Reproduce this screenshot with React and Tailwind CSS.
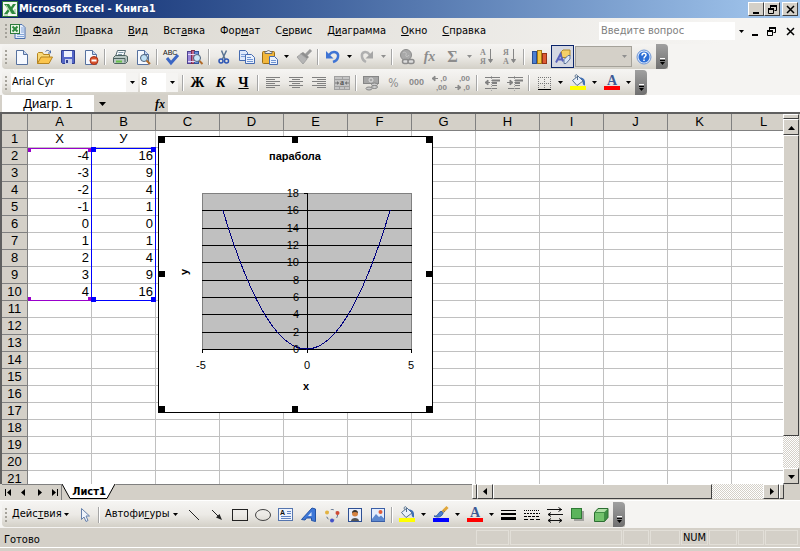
import React, { useState } from 'react';

const COLUMNS = 'ABCDEFGHIJKL'.split('');
const ROWS = Array.from({ length: 21 }, (_, i) => i + 1);

const DATA = [
  ['X', 'У'],
  [-4, 16],
  [-3, 9],
  [-2, 4],
  [-1, 1],
  [0, 0],
  [1, 1],
  [2, 4],
  [3, 9],
  [4, 16],
];

const MENU = [
  ['', 'Ф', 'айл'],
  ['', 'П', 'равка'],
  ['', 'В', 'ид'],
  ['Вст', 'а', 'вка'],
  ['Фор', 'м', 'ат'],
  ['С', 'е', 'рвис'],
  ['Д', 'и', 'аграмма'],
  ['', 'О', 'кно'],
  ['', 'С', 'правка'],
];

const Svg = ({ children, w = 16, h = 16 }) => (
  <svg width={w} height={h} viewBox={`0 0 ${w} ${h}`} fill="none" aria-hidden="true" className="shrink-0 overflow-visible">
    {children}
  </svg>
);

/* ---------- icons ---------- */

const ExcelIcon = () => (
  <Svg>
    <rect x="0.5" y="0.5" width="15" height="15" fill="#f4f8f1" stroke="#2d7a3c" />
    <path d="M2 3h5l2 3 2-3h3l-3.500 5 3.500 5h-4.500L7.500 10 5.500 13H2l4-5z" fill="#2f8a3e" />
    <path d="M9.500 13 4 4" stroke="#bfe3b8" />
    <path d="M12 9h2M12 11h2M2 14h4" stroke="#8fbf8f" />
  </Svg>
);

const WorkbookIcon = () => (
  <Svg>
    <path d="M5 1.500h7l3 3v11H5z" fill="#e6eefb" stroke="#4a6fae" />
    <path d="M11 5h3M11 7h3M11 9h3M7 11.500h7M7 13.500h7" stroke="#86a6d8" />
    <rect x="0.500" y="1.500" width="9" height="9" fill="#e9f5e6" stroke="#2d7a3c" />
    <path d="m2.500 3.500 5 5m0-5-5 5" stroke="#2f8a3e" strokeWidth="2" />
  </Svg>
);

const Page = () => (
  <>
    <path d="M2.500 1.500h7l4 4v10h-11z" fill="#f6f9ff" stroke="#56719f" />
    <path d="M9.500 1.500v4h4" fill="#c6d6f2" stroke="#56719f" />
  </>
);

const NewIcon = () => <Svg><Page /></Svg>;

const OpenIcon = () => (
  <Svg>
    <path d="M0.500 14.500v-10l1-1h4l1 2h6v3" fill="#f9d978" stroke="#b58421" />
    <path d="M0.500 14.500 4 8h11.500L12 14.500z" fill="#fbc54d" stroke="#b58421" />
    <path d="M8.500 2.500c2-2 4-1 5 1m0-2v2.500h-2.500" stroke="#4c6ea8" />
  </Svg>
);

const SaveIcon = () => (
  <Svg>
    <path d="M1.500 1.500h13v13h-12l-1-1z" fill="#5567c8" stroke="#31408f" />
    <rect x="4" y="2" width="8" height="6" fill="#eef2fc" />
    <rect x="5" y="10" width="7" height="5" fill="#c8d0ea" />
    <rect x="6" y="11" width="2" height="3" fill="#31408f" />
  </Svg>
);

const PermissionIcon = () => (
  <Svg>
    <Page />
    <circle cx="11" cy="11.500" r="4" fill="#d9512c" stroke="#a7341a" />
    <path d="M8.500 11.500h5" stroke="#fff" strokeWidth="2" />
  </Svg>
);

const PrintIcon = () => (
  <Svg>
    <path d="M5.500 1.500h8l-2 6h-8z" fill="#f7fafc" stroke="#556b73" />
    <path d="M6.500 3.500h5M6 5.500h4" stroke="#7f98a8" />
    <path d="M1.500 8.500 3.500 6.500h10l2 1v5l-2 2h-11l-1-1z" fill="#b9c7c4" stroke="#4d625f" />
    <path d="M2 9.500h11v4" stroke="#4d625f" />
    <path d="M4 12.500h6" stroke="#68c14b" strokeWidth="2" />
  </Svg>
);

const PreviewIcon = () => (
  <Svg>
    <Page />
    <circle cx="9" cy="9" r="3.500" fill="#bfe0f6" stroke="#4b5f78" />
    <path d="m11.500 11.500 3.500 3.500" stroke="#b06a28" strokeWidth="2" />
  </Svg>
);

const SpellIcon = () => (
  <Svg w={18} h={18}>
    <path d="m4 10 4 5 7-8" stroke="#3b66c4" strokeWidth="3" />
    <text x="0" y="7" fontSize="7" fontFamily="Liberation Sans, sans-serif" fill="#111">ABC</text>
  </Svg>
);

const ResearchIcon = () => (
  <Svg>
    <rect x="0.500" y="2.500" width="4" height="12" fill="#9a86d8" stroke="#4f4390" />
    <rect x="4.500" y="1.500" width="3" height="13" fill="#c46a8c" stroke="#7c3050" />
    <rect x="7.500" y="2.500" width="4" height="12" fill="#6c8fd8" stroke="#35549a" />
    <path d="M1 5.500h10M1 12.500h10" stroke="#e6dcf6" />
    <circle cx="10" cy="9" r="3.500" fill="#c9e6f8" stroke="#4b5f78" />
    <path d="m12.500 12 3 3" stroke="#b06a28" strokeWidth="2" />
  </Svg>
);

const CutIcon = () => (
  <Svg>
    <path d="M5.500 1.500 9 10M10.500 1.500 6.500 10" stroke="#5b7493" strokeWidth="1.500" />
    <circle cx="5" cy="12" r="2" stroke="#2c55b4" strokeWidth="1.500" />
    <circle cx="10.500" cy="12" r="2" stroke="#2c55b4" strokeWidth="1.500" />
  </Svg>
);

const CopyIcon = () => (
  <Svg>
    <path d="M0.500 1.500h6l2 2v8h-8z" fill="#dfe9fb" stroke="#466bb0" />
    <path d="M2 5.500h4M2 7.500h4" stroke="#7d9fd8" />
    <path d="M6.500 5.500h6l3 3v6h-9z" fill="#eaf1fd" stroke="#466bb0" />
    <path d="M8 8.500h4M8 10.500h6M8 12.500h6" stroke="#6f94d2" />
  </Svg>
);

const PasteIcon = () => (
  <Svg>
    <rect x="0.500" y="2.500" width="12" height="12" rx="1" fill="#f2b73c" stroke="#9c6d13" />
    <path d="M3 4.500V2.500h2l1.500-1.500L8 2.500h2v2z" fill="#e9eef5" stroke="#6d6d6d" />
    <path d="M7.500 7.500h5l3 3v5h-8z" fill="#eaf1fd" stroke="#466bb0" />
    <path d="M9 11.500h5M9 13.500h5" stroke="#6f94d2" />
  </Svg>
);

const BrushIcon = () => (
  <Svg>
    <path d="m15 1-5 5" stroke="#9b9b9b" strokeWidth="3" />
    <path d="m7 3 6 5-2 2-7-5z" fill="#8e8e8e" />
    <path d="m5 5 6 5-4 5-6-7z" fill="#b5b5b5" stroke="#a3a3a3" />
  </Svg>
);

const UndoIcon = () => (
  <Svg>
    <path d="M4 6c4-5 10-3 9 2-.5 3-2 4-5 5" stroke="#3f74d4" strokeWidth="2.500" />
    <path d="M1 2v7.500h7.500z" fill="#3f74d4" />
  </Svg>
);

const RedoIcon = () => (
  <Svg>
    <path d="M11 6C7 1 2 3 3 8c.5 3 2 4 4 5" stroke="#b0b0b0" strokeWidth="2.500" />
    <path d="M14 2v7.500H6.500z" fill="#a6a6a6" />
  </Svg>
);

const LinkIcon = () => (
  <Svg>
    <circle cx="7" cy="6" r="5.500" fill="#a8a8a8" stroke="#8c8c8c" />
    <path d="M4 4c2-2 4 0 3 2s2 2 3 0" stroke="#c6c6c6" />
    <rect x="3.500" y="10.500" width="6" height="4" rx="2" stroke="#8c8c8c" strokeWidth="1.500" fill="#ddd" />
    <rect x="9" y="10.500" width="6" height="4" rx="2" stroke="#8c8c8c" strokeWidth="1.500" fill="#ddd" />
  </Svg>
);

const SortIcon = ({ top, bottom }) => (
  <Svg>
    <g fontFamily="Liberation Serif, serif" fontWeight="bold" fontSize="8" fill="#8c8c8c">
      <text x="1" y="6">{top}</text>
      <text x="1" y="15">{bottom}</text>
    </g>
    <path d="M11.500 0v13M9.500 10.500l2 3 2-3z" stroke="#868686" fill="#868686" />
  </Svg>
);

const ChartIcon = () => (
  <Svg>
    <rect x="1.500" y="2.500" width="4" height="12" fill="#4c7ed0" stroke="#2b4f92" />
    <rect x="6.500" y="1.500" width="4" height="13" fill="#f5c542" stroke="#a77b13" />
    <rect x="11.500" y="4.500" width="4" height="10" fill="#dc5a33" stroke="#973116" />
  </Svg>
);

const DrawingIcon = () => (
  <Svg>
    <path d="M6.500 2.500 8 1h7v6l-1.500 1.500h-7z" fill="#f5d068" stroke="#b08a2a" />
    <path d="M1 13.500 5.500 5 8 12.500M2.500 10.500h5" stroke="#5a63bd" strokeWidth="2" />
    <path d="m9 10.500 4-4h2v3.500l-4 4.500H9z" fill="#dbe6f6" stroke="#5c7399" />
  </Svg>
);

const HelpIcon = () => (
  <Svg>
    <circle cx="8" cy="8" r="7" fill="#dbe8fb" stroke="#6f96d6" />
    <circle cx="8" cy="8" r="5.500" fill="#2e6fd6" />
    <path d="M6 6.500c0-3 4-3 4-.500 0 1.500-2 1.500-2 3.500M8 10.500V12" stroke="#fff" strokeWidth="1.500" />
  </Svg>
);

const LinesIcon = ({ d }) => (
  <Svg><path d={d} stroke="#808080" /></Svg>
);

const MergeIcon = () => (
  <Svg>
    <rect x="0.500" y="1.500" width="15" height="13" fill="#c4c4c4" stroke="#a0a0a0" />
    <path d="M1 4.500h14M1 11.500h14M8.500 1v3M5.500 12v2M10.500 12v2" stroke="#a0a0a0" />
    <path d="M1 8h4M11 8h4" stroke="#777" />
    <path d="m3 6 2 2-2 2zM13 6l-2 2 2 2z" fill="#777" />
    <text x="6" y="10" fontSize="8" fontWeight="bold" fontFamily="Liberation Serif, serif" fill="#555">a</text>
  </Svg>
);

const CurrencyIcon = () => (
  <Svg>
    <rect x="0.500" y="1.500" width="15" height="7" fill="#a6a6a6" stroke="#868686" />
    <circle cx="8" cy="5" r="2" stroke="#ddd" />
    <ellipse cx="11.500" cy="9.500" rx="3" ry="1.500" fill="#ccc" stroke="#868686" />
    <ellipse cx="11.500" cy="12" rx="3" ry="1.500" fill="#ccc" stroke="#868686" />
    <ellipse cx="6" cy="13.500" rx="3" ry="1.500" fill="#ccc" stroke="#868686" />
  </Svg>
);

const DecimalIcon = ({ top, bottom, more }) => (
  <Svg w={18}>
    <g fontFamily="Liberation Sans, sans-serif" fontWeight="bold" fontSize="8" fill="#8a8a8a" textAnchor="end">
      <text x="16" y="6">{top}</text>
      <text x="16" y="15">{bottom}</text>
    </g>
    {more
      ? <path d="M1 3.500h6M4 1 1 3.500 4 6z" stroke="#8a8a8a" fill="#8a8a8a" />
      : <path d="M1 12.500h6M4 10l3 2.500L4 15z" stroke="#8a8a8a" fill="#8a8a8a" />}
  </Svg>
);

const IndentIcon = ({ right }) => (
  <Svg>
    <path d="M1 2.500h15M8 10.500h5M1 13.500h12" stroke="#808080" />
    <path d="M8 5.500h8M8 8h5" stroke="#808080" strokeWidth="2" />
    <path d="M7.500 1v15" stroke="#a8a8a8" strokeDasharray="1 1" />
    {right
      ? <path d="M0 7.500h5M3 5l3 2.500L3 10z" stroke="#808080" fill="#808080" />
      : <path d="M1 7.500h5M4 5 1 7.500 4 10z" stroke="#808080" fill="#808080" />}
  </Svg>
);

const BordersIcon = () => (
  <Svg>
    <path d="M2 2.500h13M2 8.500h13M2.500 2v12M8.500 2v12M14.500 2v12" stroke="#777" strokeDasharray="1 1" />
    <path d="M2 14.500h13" stroke="#000" />
  </Svg>
);

const FillIcon = () => (
  <Svg w={16} h={17}>
    <path d="M2.500 6.500 8 2l5 5-6 4.500z" fill="#e9f0fa" stroke="#56708f" />
    <path d="M7.500 6V1.500c-1.500-2-3 0-2 2" stroke="#56708f" />
    <path d="M9 3.500c4-.500 6 2 6 4.500v3.500c-2 0-3-3-2-5z" fill="#3f6fb6" />
    <path d="M0 12h16v4H0z" fill="#ff0" />
  </Svg>
);

const LineColorIcon = () => (
  <Svg w={16} h={17}>
    <path d="m14.500 1-5 5" stroke="#e0a63a" strokeWidth="3" />
    <path d="m10.500 4.500 1.500 1.500" stroke="#777" />
    <path d="M1 10c4 1 4-4 7-4.500 2 0 2.500 1.500 1.500 3-2 3-6 3-8.500 1.500z" fill="#4b7dd0" stroke="#2b57a3" />
    <path d="M0 12h16v4H0z" fill="#00f" />
  </Svg>
);

const FontColorIcon = () => (
  <Svg w={16} h={17}>
    <text x="8" y="11" textAnchor="middle" fontSize="14" fontWeight="bold" fontFamily="Liberation Serif, serif" fill="#3d5a96">A</text>
    <path d="M0 12h16v4H0z" fill="#f00" />
  </Svg>
);

const CursorIcon = () => (
  <Svg>
    <path d="M4.500 1.500v11l2.500-2.500 2 4.500 2-1-2-4.500h3.500z" fill="#eef3fb" stroke="#6580ab" />
  </Svg>
);

const LineIcon = () => <Svg><path d="m3 3 10 10" stroke="#222" /></Svg>;

const ArrowIcon = () => (
  <Svg>
    <path d="m3 3 7 7" stroke="#222" />
    <path d="m13 13-6-2.500L10.500 7z" fill="#222" />
  </Svg>
);

const RectIcon = () => <Svg><rect x="0.500" y="2.500" width="15" height="11" stroke="#222" /></Svg>;
const OvalIcon = () => <Svg><ellipse cx="8" cy="8" rx="7.500" ry="5.500" stroke="#444" /></Svg>;

const TextBoxIcon = () => (
  <Svg>
    <rect x="0.500" y="1.500" width="14" height="12" fill="#eef3fc" stroke="#5575ae" />
    <path d="M9 4.500h4M9 6.500h4M3 9.500h10M3 11.500h10" stroke="#5f84c4" />
    <text x="2" y="8" fontSize="7" fontWeight="bold" fontFamily="Liberation Sans, sans-serif" fill="#111">A</text>
  </Svg>
);

const WordArtIcon = () => (
  <Svg>
    <path d="M0.500 12.500 11 1l3.500 1v12.500l-4-1V11H5.500L4 13z" fill="#3e78d8" stroke="#2453a4" />
    <path d="m7 9 3.500-4v4z" fill="#dce8fa" />
  </Svg>
);

const DiagramIcon = () => (
  <Svg>
    <circle cx="8" cy="8" r="5.500" stroke="#556a88" strokeDasharray="3 3" />
    <circle cx="3" cy="5.500" r="2" fill="#e3b341" />
    <circle cx="13.500" cy="6" r="2" fill="#cf4a34" />
    <circle cx="8" cy="13.500" r="2" fill="#4452c8" />
  </Svg>
);

const ClipArtIcon = () => (
  <Svg>
    <rect x="1.500" y="1.500" width="13" height="13" fill="#e8eefb" stroke="#2e4f93" />
    <path d="M4 14c0-4 8-4 8 0z" fill="#555" />
    <circle cx="8" cy="6.500" r="3" fill="#d68342" />
    <path d="M5 6c0-4 6-4 6 0-2-1.500-4-1.500-6 0z" fill="#333" />
  </Svg>
);

const PictureIcon = () => (
  <Svg>
    <rect x="1.500" y="1.500" width="13" height="13" fill="#e4edfc" stroke="#3a5ea6" />
    <circle cx="10.500" cy="5" r="2" fill="#e05c38" />
    <path d="m2 12 4-5 3 3 2-1.500 3.500 3.500V14H2z" fill="#5d88cf" />
  </Svg>
);

const LineStyleIcon = () => (
  <Svg>
    <path d="M0 3.500h15" stroke="#000" />
    <path d="M0 7h15" stroke="#000" strokeWidth="2" />
    <path d="M0 11.500h15" stroke="#000" strokeWidth="3" />
  </Svg>
);

const DashStyleIcon = () => (
  <Svg>
    <path d="M0 3.500h16" stroke="#000" strokeDasharray="1 1" />
    <path d="M0 6.500h16" stroke="#000" strokeDasharray="2 1" />
    <path d="M0 9.500h16" stroke="#000" strokeDasharray="3 1" />
    <path d="M0 12.500h16" stroke="#000" strokeDasharray="4 2" />
  </Svg>
);

const ArrowStyleIcon = () => (
  <Svg>
    <path d="M0 2.500h15M11.500 0.500l3 2-3 2M1 7.500h15M4 5.500l-3 2 3 2M1 13.500h14M4 11.500l-3 2 3 2M12 11.500l3 2-3 2" stroke="#111" />
  </Svg>
);

const ShadowIcon = () => (
  <Svg>
    <rect x="4" y="4" width="10" height="10" fill="#a3a39f" />
    <rect x="1.500" y="1.500" width="10" height="10" fill="#5bb45b" stroke="#2f7a35" />
  </Svg>
);

const CubeIcon = () => (
  <Svg>
    <path d="M1.500 5.500 5 1.500h10v9l-3.500 4h-10z" fill="#3f8f45" stroke="#2c6e32" />
    <path d="M2 6h9v8H2z" fill="#72c26c" />
    <path d="m2.500 5 3-3h9l-3 3z" fill="#b1e0a8" />
  </Svg>
);

/* ---------- toolbar parts ---------- */

const Caret = ({ muted }) => (
  <svg width="5" height="3" viewBox="0 0 5 3" aria-hidden="true" className={muted ? 'shrink-0 fill-[#8f8f8f]' : 'shrink-0 fill-black'}>
    <path d="M0 0h5L2.500 3z" />
  </svg>
);

const Grip = () => (
  <div className="flex w-2 shrink-0 flex-col items-center justify-center gap-[2px]">
    {[0, 1, 2, 3].map((i) => (
      <span key={i} className="size-[2px] bg-[#a5a29a]" />
    ))}
  </div>
);

const Sep = () => (
  <div className="flex w-[6px] shrink-0 items-center justify-center">
    <span className="h-4 w-px bg-[#a6a6a6]" />
    <span className="h-4 w-px bg-white" />
  </div>
);

const Tool = ({ label, children, drop, muted }) => (
  <div className="flex shrink-0">
    <button type="button" aria-label={label} className="flex w-[23px] items-center justify-center">
      {children}
    </button>
    {drop && (
      <button type="button" aria-label={`${label}: список`} className="flex w-[11px] items-center justify-center">
        <Caret muted={muted} />
      </button>
    )}
  </div>
);

const EndCap = () => (
  <button
    type="button"
    aria-label="Параметры панелей инструментов"
    className="ml-px flex w-3 shrink-0 flex-col items-center justify-end gap-px rounded-r-sm bg-linear-to-b from-[#a0a0a0] to-[#707070] pb-1"
  >
    <span className="h-px w-[5px] bg-white" />
    <span className="h-px w-[5px] bg-black" />
    <Caret />
  </button>
);

const Toolbar = ({ label, children }) => (
  <div role="toolbar" aria-label={label} className="flex">
    <div className="flex h-[25px] rounded-l-sm bg-linear-to-b from-[#f5f4f2] via-[#eceae6] to-[#d3d0c7]">{children}</div>
  </div>
);

const Glyph = ({ children, className }) => (
  <span className={`font-["Liberation_Serif",serif] font-bold leading-4 ${className}`}>{children}</span>
);

const RAISED = 'border border-t-white border-l-white border-r-[#404040] border-b-[#404040] bg-[#d4d0c8]';
const DITHER = 'bg-[repeating-conic-gradient(#fff_0_25%,#d4d0c8_0_50%)] bg-[length:2px_2px]';

const WindowGlyph = ({ kind }) => (
  <svg width="9" height="9" viewBox="0 0 9 9" fill="none" stroke="#000" aria-hidden="true">
    {kind === 'min' && <path d="M1 8h6" strokeWidth="2" />}
    {kind === 'restore' && (
      <>
        <path d="M2.500 3V1h6v4.500h-2" />
        <path d="M2 1h7" strokeWidth="2" />
        <path d="M0.500 4v4.500h5V4" />
        <path d="M0 4h6" strokeWidth="2" />
      </>
    )}
    {kind === 'close' && <path d="m1 1 7 7m0-7-7 7" strokeWidth="1.500" />}
  </svg>
);

const Arrow = ({ dir }) => {
  const d = {
    up: 'M0 6h7L3.500 2z',
    down: 'M0 2h7L3.500 6z',
    left: 'M5 0v7L1 3.500z',
    right: 'M2 0v7l4-3.500z',
    first: 'M0 0h1v7H0zM6 0v7L2 3.500z',
    last: 'M6 0h1v7H6zM1 0v7l4-3.500z',
  }[dir];
  return (
    <svg width="7" height="7" viewBox="0 0 7 7" aria-hidden="true">
      <path d={d} />
    </svg>
  );
};

/* ---------- page sections ---------- */

const TitleBar = () => (
  <header className="flex h-[18px] items-center bg-linear-to-r from-[#0a246a] to-[#a6caf0] px-[2px]">
    <ExcelIcon />
    <h1 className="ml-px flex-1 text-[11px] font-bold text-white">Microsoft Excel - Книга1</h1>
    <div className="flex">
      {['min', 'restore', 'close'].map((kind) => (
        <button
          key={kind}
          type="button"
          aria-label={kind}
          className={`flex h-[14px] w-4 items-center justify-center last:ml-[2px] ${RAISED}`}
        >
          <WindowGlyph kind={kind} />
        </button>
      ))}
    </div>
  </header>
);

const MenuBar = () => (
  <nav className="flex h-[26px] items-center bg-linear-to-r from-[#d8d5cd] to-[#f5f4f2] to-90% px-[2px]">
    <Grip />
    <WorkbookIcon />
    <div className="flex flex-1 gap-px">
      {MENU.map(([before, key, after]) => (
        <button key={before + key + after} type="button" className="px-[7px] leading-4">
          {before}
          <u>{key}</u>
          {after}
        </button>
      ))}
    </div>
    <div className="flex h-[18px] w-[148px] bg-white">
      <input aria-label="Введите вопрос" placeholder="Введите вопрос" className="min-w-0 flex-1 px-[2px] outline-none placeholder:text-[#808080]" />
      <span className="flex w-3 items-center justify-center bg-[#f5f4f2]">
        <Caret />
      </span>
    </div>
    <div className="flex">
      {['min', 'restore', 'close'].map((kind) => (
        <button key={kind} type="button" aria-label={`${kind} книгу`} className="flex size-4 items-center justify-center last:ml-[3px]">
          <WindowGlyph kind={kind} />
        </button>
      ))}
    </div>
  </nav>
);

const StandardToolbar = () => (
  <Toolbar label="Стандартная">
    <Grip />
    <Tool label="Создать"><NewIcon /></Tool>
    <Tool label="Открыть"><OpenIcon /></Tool>
    <Tool label="Сохранить"><SaveIcon /></Tool>
    <Tool label="Разрешения"><PermissionIcon /></Tool>
    <Sep />
    <Tool label="Печать"><PrintIcon /></Tool>
    <Tool label="Просмотр"><PreviewIcon /></Tool>
    <Sep />
    <Tool label="Орфография"><SpellIcon /></Tool>
    <Tool label="Справочные материалы"><ResearchIcon /></Tool>
    <Sep />
    <Tool label="Вырезать"><CutIcon /></Tool>
    <Tool label="Копировать"><CopyIcon /></Tool>
    <Tool label="Вставить" drop><PasteIcon /></Tool>
    <Tool label="Формат по образцу"><BrushIcon /></Tool>
    <Sep />
    <Tool label="Отменить" drop><UndoIcon /></Tool>
    <Tool label="Вернуть" drop muted><RedoIcon /></Tool>
    <Sep />
    <Tool label="Гиперссылка"><LinkIcon /></Tool>
    <Tool label="Функция"><Glyph className="text-[14px] italic text-[#8c8c8c]">fx</Glyph></Tool>
    <Tool label="Автосумма" drop muted><Glyph className="text-[16px] text-[#8c8c8c]">Σ</Glyph></Tool>
    <Tool label="По возрастанию"><SortIcon top="А" bottom="Я" /></Tool>
    <Tool label="По убыванию"><SortIcon top="Я" bottom="А" /></Tool>
    <Sep />
    <Tool label="Мастер диаграмм"><ChartIcon /></Tool>
    <button type="button" aria-label="Рисование" className="my-px ml-px flex w-[23px] items-center justify-center border border-[#0a246a] bg-[#d5d8e2]">
      <DrawingIcon />
    </button>
    <div className="my-[2px] ml-px flex w-[57px] items-center border border-[#a5a29a] bg-[#d4d0c8] pr-1">
      <select aria-label="Масштаб" disabled className="min-w-0 flex-1 appearance-none" />
      <Caret muted />
    </div>
    <Tool label="Справка"><HelpIcon /></Tool>
    <EndCap />
  </Toolbar>
);

const Combo = ({ label, value, className }) => (
  <div className={`my-[3px] flex shrink-0 bg-white ${className}`}>
    <select aria-label={label} defaultValue={value} className="min-w-0 flex-1 appearance-none px-px outline-none">
      <option>{value}</option>
    </select>
    <span className="flex w-3 items-center justify-center bg-[#f5f4f2]">
      <Caret />
    </span>
  </div>
);

const FormatToolbar = () => (
  <Toolbar label="Форматирование">
    <Grip />
    <Combo label="Шрифт" value="Arial Cyr" className="ml-px w-[127px]" />
    <Combo label="Размер" value="8" className="mx-[2px] w-[38px]" />
    <Sep />
    <Tool label="Полужирный"><Glyph className="text-[14px]">Ж</Glyph></Tool>
    <Tool label="Курсив"><Glyph className="text-[14px] italic">К</Glyph></Tool>
    <Tool label="Подчеркнутый"><Glyph className="text-[14px] underline">Ч</Glyph></Tool>
    <Sep />
    <Tool label="По левому краю"><LinesIcon d="M1 2.500h14M1 4.500h9M1 6.500h14M1 8.500h9M1 10.500h14M1 12.500h9" /></Tool>
    <Tool label="По центру"><LinesIcon d="M1 2.500h14M4 4.500h8M1 6.500h14M4 8.500h8M1 10.500h14M4 12.500h8" /></Tool>
    <Tool label="По правому краю"><LinesIcon d="M1 2.500h14M6 4.500h9M1 6.500h14M6 8.500h9M1 10.500h14M6 12.500h9" /></Tool>
    <Tool label="Объединить"><MergeIcon /></Tool>
    <Sep />
    <Tool label="Денежный формат"><CurrencyIcon /></Tool>
    <Tool label="Процентный формат"><span className="text-[12px] text-[#8a8a8a]">%</span></Tool>
    <Tool label="Формат с разделителями"><span className='font-["Liberation_Sans_Narrow","Liberation_Sans",sans-serif] text-[9px] font-bold text-[#8a8a8a]'>000</span></Tool>
    <Tool label="Увеличить разрядность"><DecimalIcon top=",0" bottom=",00" more /></Tool>
    <Tool label="Уменьшить разрядность"><DecimalIcon top=",00" bottom=",0" /></Tool>
    <Sep />
    <Tool label="Уменьшить отступ"><IndentIcon /></Tool>
    <Tool label="Увеличить отступ"><IndentIcon right /></Tool>
    <Sep />
    <Tool label="Границы" drop><BordersIcon /></Tool>
    <Tool label="Цвет заливки" drop><FillIcon /></Tool>
    <Tool label="Цвет шрифта" drop><FontColorIcon /></Tool>
    <EndCap />
  </Toolbar>
);

const FormulaBar = () => {
  const [name, setName] = useState('Диагр. 1');
  return (
    <div className="flex h-[17px] pl-[2px] font-['Liberation_Sans',sans-serif] text-[13px]">
      <input
        aria-label="Имя"
        value={name}
        onChange={(e) => setName(e.target.value)}
        className="w-[92px] bg-white text-center leading-4 outline-none"
      />
      <div className="flex w-[74px] items-center justify-between bg-[#d4d0c8] pl-[5px] pr-[3px]">
        <svg width="7" height="4" viewBox="0 0 7 4" aria-hidden="true"><path d="M0 0h7L3.500 4z" /></svg>
        <Glyph className="text-[12px] italic">fx</Glyph>
      </div>
      <input aria-label="Строка формул" className="min-w-0 flex-1 bg-white outline-none" />
    </div>
  );
};

const Chart = () => {
  // plot area in svg units
  const left = 44;
  const top = 57;
  const width = 209;
  const height = 156;
  const px = (x) => left + ((x + 5) / 10) * width;
  const py = (y) => top + height - (y / 18) * height;

  const points = Array.from({ length: 81 }, (_, i) => {
    const x = -4 + i * 0.1;
    return `${px(x)},${py(x * x)}`;
  }).join(' ');

  const handles = [1, 134, 268].flatMap((x) => [1, 135, 270].map((y) => [x, y])).filter(([x, y]) => x !== 134 || y !== 135);

  return (
    <svg width="275" height="277" viewBox="0 0 275 277" role="img" aria-label="парабола" className="absolute left-[156px] top-[22px]">
      <g shapeRendering="crispEdges">
        <rect x="0.500" y="0.500" width="274" height="276" fill="#fff" stroke="#000" />
        <rect x={left + 0.5} y={top + 0.5} width={width} height={height} fill="#c0c0c0" stroke="#808080" />
        {[0, 2, 4, 6, 8, 10, 12, 14, 16].map((v) => (
          <path key={v} d={`M${left} ${Math.round(py(v)) + 0.5}h${width + 1}`} stroke="#000" />
        ))}
        <path d="M149.500 57v160M146 57.500h4M44.500 213v4M253.500 213v4" stroke="#000" />
        <polyline points={points} fill="none" stroke="#000080" />
        {handles.map(([x, y]) => (
          <rect key={`${x}-${y}`} x={x} y={y} width="6" height="6" fill="#000" />
        ))}
      </g>
      <g fontFamily="Liberation Sans, sans-serif" fontSize="11" fill="#000">
        {[0, 2, 4, 6, 8, 10, 12, 14, 16, 18].map((v) => (
          <text key={v} x="141" y={Math.round(py(v)) + 4} textAnchor="end">{v}</text>
        ))}
        <g textAnchor="middle">
          <text x="43" y="233">-5</text>
          <text x="149" y="233">0</text>
          <text x="253" y="233">5</text>
          <g fontWeight="bold">
            <text x="137" y="24">парабола</text>
            <text x="148" y="254">x</text>
            <text transform="translate(30 136) rotate(-90)">у</text>
          </g>
        </g>
      </g>
    </svg>
  );
};

const RangeMarks = () => (
  <>
    <div className="absolute left-[26px] top-[34px] h-[153px] w-16 border-y border-y-[#9900cc]">
      <span className="absolute -top-px left-0 h-1 w-[3px] bg-[#9900cc]" />
      <span className="absolute -bottom-px left-0 h-1 w-[3px] bg-[#9900cc]" />
      <span className="absolute -top-px right-0 h-1 w-1 bg-[#9900cc]" />
      <span className="absolute -bottom-px right-0 h-1 w-1 bg-[#9900cc]" />
    </div>
    <div className="absolute left-[89px] top-[34px] h-[153px] w-[65px] border border-[#0000ff]">
      <span className="absolute -left-px -top-[2px] size-[5px] bg-[#0000ff]" />
      <span className="absolute -right-px -top-[2px] size-[5px] bg-[#0000ff]" />
      <span className="absolute -bottom-[2px] -left-px size-[5px] bg-[#0000ff]" />
      <span className="absolute -bottom-[2px] -right-px size-[5px] bg-[#0000ff]" />
    </div>
  </>
);

const Sheet = () => (
  <div className="relative min-w-0 flex-1 overflow-hidden">
    <table className="w-[794px] table-fixed border-separate border-spacing-0 bg-white font-['Liberation_Sans',sans-serif] text-[13px] leading-4">
      <colgroup>
        <col className="w-[26px]" />
        {COLUMNS.map((c) => <col key={c} className="w-16" />)}
      </colgroup>
      <thead>
        <tr className="bg-[#d4d0c8]">
          <th aria-label="Выделить все" className="h-[17px] border-r border-b border-[#808080] p-0" />
          {COLUMNS.map((c) => (
            <th key={c} scope="col" className="h-[17px] border-r border-b border-[#808080] p-0 font-normal">{c}</th>
          ))}
        </tr>
      </thead>
      <tbody>
        {ROWS.map((n) => (
          <tr key={n}>
            <th scope="row" className="h-[17px] border-r border-b border-[#808080] bg-[#d4d0c8] p-0 font-normal">{n}</th>
            {COLUMNS.map((c, i) => (
              <td key={c} className={`h-[17px] border-r border-b border-[#c0c0c0] p-0 ${n === 1 ? 'text-center' : 'pr-[2px] text-right'}`}>
                {DATA[n - 1]?.[i]}
              </td>
            ))}
          </tr>
        ))}
      </tbody>
    </table>
    <RangeMarks />
    <Chart />
  </div>
);

const VerticalScroll = () => (
  <div className={`mr-px flex w-4 shrink-0 flex-col ${DITHER}`}>
    <div className={`h-[5px] ${RAISED}`} />
    <button type="button" aria-label="Вверх" className={`flex h-4 items-center justify-center ${RAISED}`}><Arrow dir="up" /></button>
    <div className={`h-[301px] ${RAISED}`} />
    <button type="button" aria-label="Вниз" className={`mt-auto flex h-4 items-center justify-center ${RAISED}`}><Arrow dir="down" /></button>
  </div>
);

const SheetTabs = () => (
  <div className="flex h-[17px] border-b border-white bg-[#d4d0c8] pl-[2px]">
    <div className="flex w-[60px] items-center justify-between border-t border-r border-[#808080] px-[3px]">
      {['first', 'left', 'right', 'last'].map((dir) => (
        <button key={dir} type="button" aria-label={dir}><Arrow dir={dir} /></button>
      ))}
    </div>
    <div role="tablist" className="flex">
      <button type="button" role="tab" aria-selected="true" className="relative flex w-[54px] justify-center">
        <svg width="54" height="15" viewBox="0 0 54 15" aria-hidden="true" className="absolute left-0 top-0">
          <path d="M0 0 8 14.500h37L53 0" fill="#fff" stroke="#000" />
        </svg>
        <span className="relative text-[11px] font-bold leading-[15px]">Лист1</span>
      </button>
    </div>
    <div className="flex-1 border-t border-[#808080]" />
    <div className="flex w-[312px] pb-px">
      <div className={`w-[5px] ${RAISED}`} />
      <button type="button" aria-label="Влево" className={`flex w-4 items-center justify-center ${RAISED}`}><Arrow dir="left" /></button>
      <div className={`w-[219px] ${RAISED}`} />
      <div className={`flex-1 ${DITHER}`} />
      <button type="button" aria-label="Вправо" className={`flex w-4 items-center justify-center ${RAISED}`}><Arrow dir="right" /></button>
      <div className={`w-[5px] ${RAISED}`} />
    </div>
    <div className="w-4" />
  </div>
);

const DrawingToolbar = () => (
  <div className="bg-[#f5f4f2] py-px pl-[2px]">
    <Toolbar label="Рисование">
      <Grip />
      <button type="button" className="flex w-[63px] items-center justify-between pl-[2px] pr-1">
        <span>Дейс<u>т</u>вия</span>
        <Caret />
      </button>
      <Tool label="Выбор объектов"><CursorIcon /></Tool>
      <Sep />
      <button type="button" className="flex w-20 items-center justify-between pl-[3px] pr-1">
        <span>Автофи<u>г</u>уры</span>
        <Caret />
      </button>
      <Tool label="Линия"><LineIcon /></Tool>
      <Tool label="Стрелка"><ArrowIcon /></Tool>
      <Tool label="Прямоугольник"><RectIcon /></Tool>
      <Tool label="Овал"><OvalIcon /></Tool>
      <Tool label="Надпись"><TextBoxIcon /></Tool>
      <Tool label="WordArt"><WordArtIcon /></Tool>
      <Tool label="Схема"><DiagramIcon /></Tool>
      <Tool label="Картинка"><ClipArtIcon /></Tool>
      <Tool label="Рисунок"><PictureIcon /></Tool>
      <Sep />
      <Tool label="Цвет заливки" drop><FillIcon /></Tool>
      <Tool label="Цвет линий" drop><LineColorIcon /></Tool>
      <Tool label="Цвет текста" drop><FontColorIcon /></Tool>
      <Tool label="Тип линии"><LineStyleIcon /></Tool>
      <Tool label="Тип штриха"><DashStyleIcon /></Tool>
      <Tool label="Вид стрелки"><ArrowStyleIcon /></Tool>
      <Tool label="Тень"><ShadowIcon /></Tool>
      <Tool label="Объем"><CubeIcon /></Tool>
      <EndCap />
    </Toolbar>
  </div>
);

const PANEL = 'flex items-center justify-center border border-[#e2dfd8]';

const StatusBar = () => (
  <footer className="flex h-5 gap-px border-b border-white bg-[#d4d0c8] py-[2px] pl-1 pr-[2px]">
    <span className="flex-1 leading-5">Готово</span>
    <span className={`w-[33px] ${PANEL}`} />
    <span className={`w-[112px] ${PANEL}`} />
    <span className={`w-[26px] ${PANEL}`} />
    <span className={`w-[30px] ${PANEL}`} />
    <span className={`w-[27px] leading-4 ${PANEL}`}>NUM</span>
    <span className={`w-[28px] ${PANEL}`} />
    <span className={`w-[26px] ${PANEL}`} />
    <span className={`w-[33px] ${PANEL}`} />
  </footer>
);

const App = () => (
  <div className="min-h-screen bg-[#d4d0c8] font-['DejaVu_Sans_Condensed','Noto_Sans',sans-serif] text-[11px] text-black">
    <TitleBar />
    <MenuBar />
    <div className="flex flex-col gap-px bg-[#f5f4f2] pl-[2px]">
      <StandardToolbar />
      <FormatToolbar />
    </div>
    <FormulaBar />
    <main className="flex h-[372px] border-t-2 border-l-2 border-[#606060] bg-[#d4d0c8]">
      <Sheet />
      <VerticalScroll />
    </main>
    <SheetTabs />
    <DrawingToolbar />
    <StatusBar />
  </div>
);

export default App;
